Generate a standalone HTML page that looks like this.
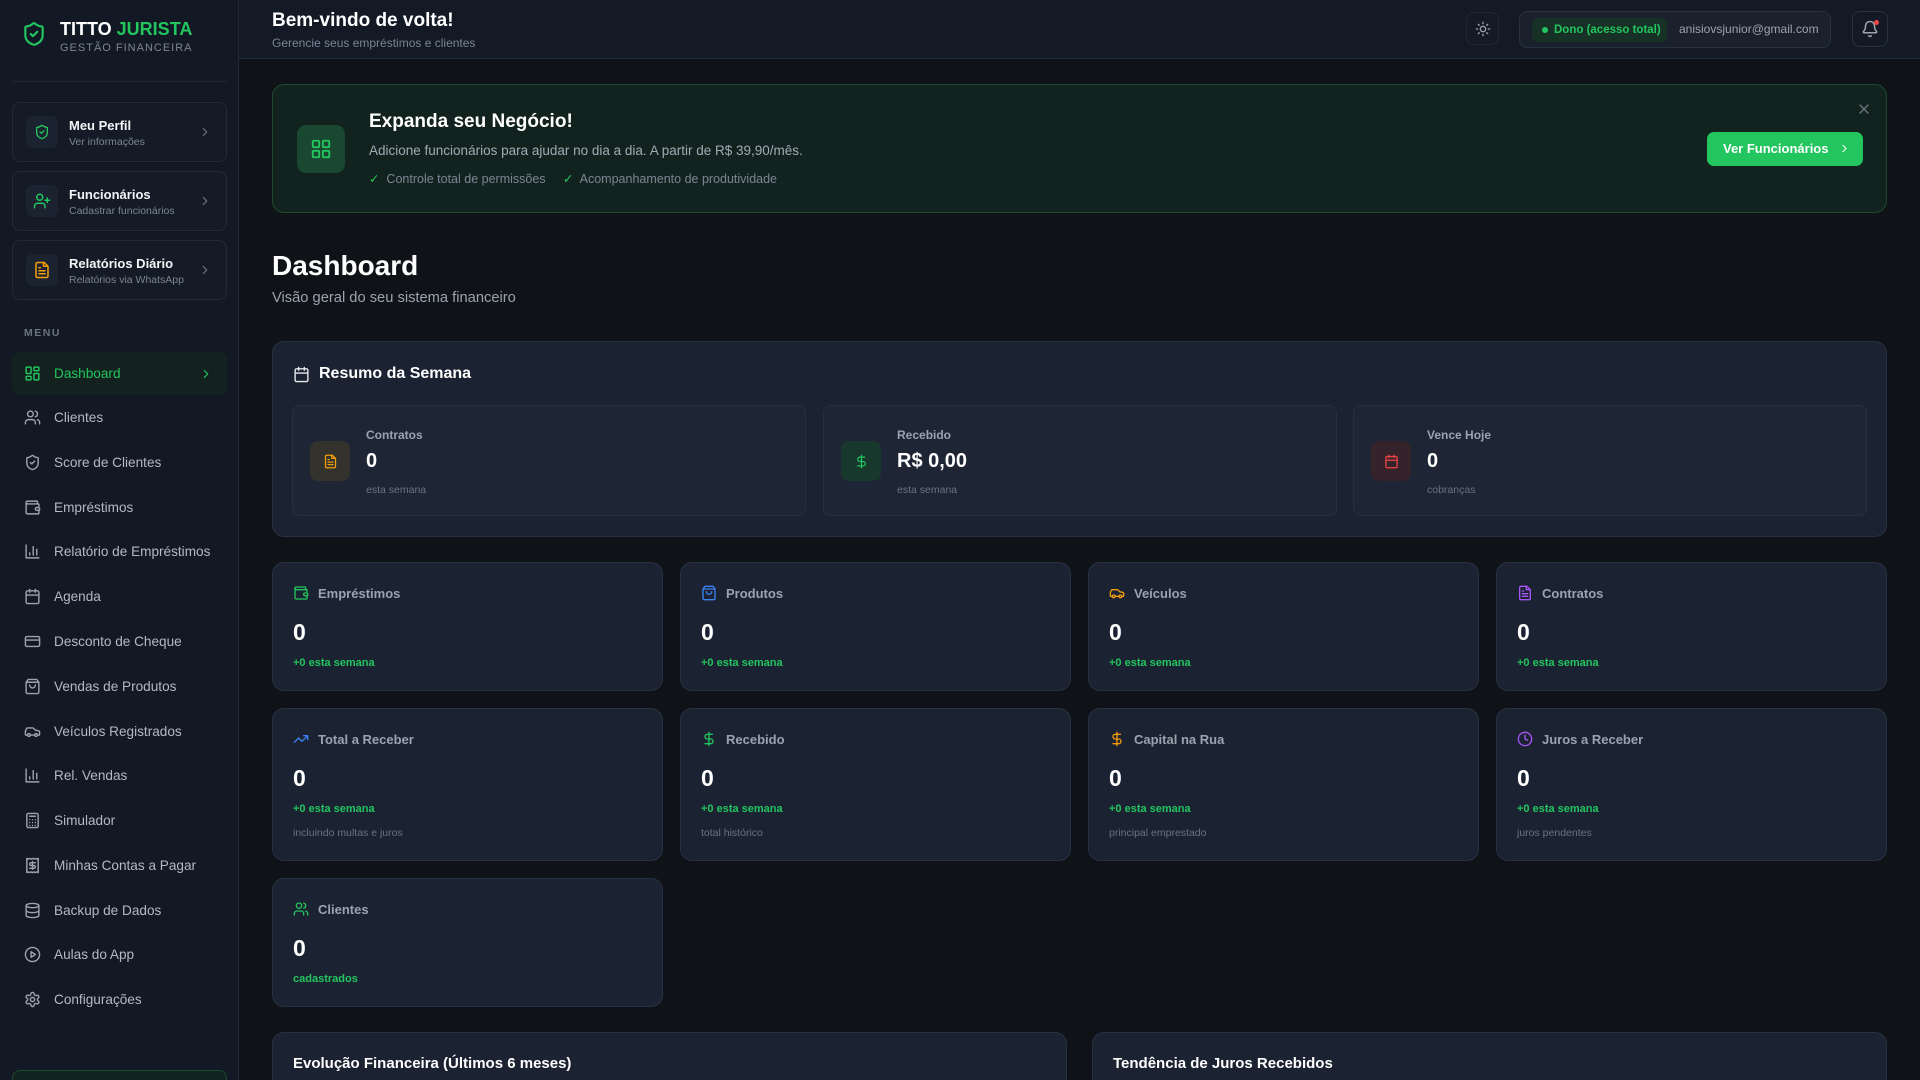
<!DOCTYPE html>
<html><head><meta charset="utf-8"><style>
*{box-sizing:border-box;margin:0;padding:0}
html{width:1920px;height:1080px;overflow:hidden}
body{width:1920px;height:1080px;overflow:hidden;background:#0f1318;font-family:"Liberation Sans",sans-serif;color:#f3f4f6;position:relative}
.abs{position:absolute}
svg{fill:none;stroke:currentColor;stroke-width:2;stroke-linecap:round;stroke-linejoin:round}
.side{left:0;top:0;width:239px;height:1080px;background:#121925;border-right:1px solid #1f2733;overflow:hidden}
.pc{position:absolute;left:12px;width:215px;height:60px;border:1px solid #222a37;border-radius:8px;background:#141b27}
.pc .ib{position:absolute;left:13px;top:13px;width:32px;height:32px;border-radius:7px;background:#1c2330;display:flex;align-items:center;justify-content:center}
.pc .t{position:absolute;left:56px;top:15px;font-size:13px;font-weight:bold;color:#f3f4f6}
.pc .s{position:absolute;left:56px;top:33px;font-size:10.5px;color:#7c8594}
.pc .ch{position:absolute;right:14px;top:22px;color:#6b7280}
.nav{position:absolute;left:12px;width:215px;height:43px;display:flex;align-items:center;padding-left:12px;font-size:13.6px;color:#b3b9c4}
.nav svg{width:17px;height:17px;margin-right:13px;color:#9ca3af}
.hdr{left:239px;top:0;width:1681px;height:59px;background:#131a26;border-bottom:1px solid #232b38}
.card{position:absolute;background:#1b2332;border:1px solid #283142;border-radius:12px}
.sc .h{position:absolute;left:20px;top:22px;display:flex;align-items:center;font-size:13px;font-weight:bold;color:#9ca3af}
.sc .h svg{width:16px;height:16px;margin-right:9px}
.sc .v{position:absolute;left:20px;top:56px;font-size:23px;font-weight:bold;color:#fff}
.sc .g{position:absolute;left:20px;top:94px;font-size:11px;font-weight:bold;color:#22c55e}
.sc .m{position:absolute;left:20px;top:118px;font-size:10.5px;color:#6b7280}
.ic{position:absolute;border:1px solid #263041;border-radius:8px;background:#1e2635;height:111px;top:405px}
.ic .b{position:absolute;left:17px;top:35px;width:40px;height:40px;border-radius:8px;display:flex;align-items:center;justify-content:center}
.ic .l{position:absolute;left:73px;top:22px;font-size:12px;font-weight:bold;color:#9ca3af}
.ic .v{position:absolute;left:73px;top:44px;font-size:20px;font-weight:bold;color:#fff}
.ic .s{position:absolute;left:73px;top:78px;font-size:10.5px;color:#6b7280}
</style></head><body>
<div class="abs side">
 <svg class="abs" style="left:21px;top:21px;width:26px;height:26px;color:#22c55e" viewBox="0 0 24 24"><path d="M20 13c0 5-3.5 7.5-7.66 8.95a1 1 0 0 1-.67-.01C7.5 20.5 4 18 4 13V6a1 1 0 0 1 1-1c2 0 4.5-1.2 6.24-2.72a1.17 1.17 0 0 1 1.52 0C14.51 3.81 17 5 19 5a1 1 0 0 1 1 1z"/><path d="m9 12 2 2 4-4"/></svg>
 <div class="abs" style="left:60px;top:19px;font-size:18px;font-weight:bold;color:#fff">TITTO <span style="color:#22c55e">JURISTA</span></div>
 <div class="abs" style="left:60px;top:42px;font-size:11px;letter-spacing:1px;color:#7c8594">GESTÃO FINANCEIRA</div>
 <div class="abs" style="left:12px;top:81px;width:215px;height:1px;background:#1f2733"></div>
 <div class="pc" style="top:102px"><div class="ib"><svg style="width:16px;height:16px;color:#22c55e" viewBox="0 0 24 24"><path d="M20 13c0 5-3.5 7.5-7.66 8.95a1 1 0 0 1-.67-.01C7.5 20.5 4 18 4 13V6a1 1 0 0 1 1-1c2 0 4.5-1.2 6.24-2.72a1.17 1.17 0 0 1 1.52 0C14.51 3.81 17 5 19 5a1 1 0 0 1 1 1z"/><path d="m9 12 2 2 4-4"/></svg></div><div class="t">Meu Perfil</div><div class="s">Ver informações</div><svg class="ch" style="width:14px;height:14px" viewBox="0 0 24 24"><path d="m9 18 6-6-6-6"/></svg></div>
 <div class="pc" style="top:171px"><div class="ib"><svg style="width:18px;height:18px;color:#22c55e" viewBox="0 0 24 24"><path d="M16 21v-2a4 4 0 0 0-4-4H6a4 4 0 0 0-4 4v2"/><circle cx="9" cy="7" r="4"/><path d="M19 8v6M22 11h-6"/></svg></div><div class="t">Funcionários</div><div class="s">Cadastrar funcionários</div><svg class="ch" style="width:14px;height:14px" viewBox="0 0 24 24"><path d="m9 18 6-6-6-6"/></svg></div>
 <div class="pc" style="top:240px"><div class="ib"><svg style="width:18px;height:18px;color:#f59e0b" viewBox="0 0 24 24"><path d="M15 2H6a2 2 0 0 0-2 2v16a2 2 0 0 0 2 2h12a2 2 0 0 0 2-2V7z"/><path d="M14 2v5h5M16 13H8M16 17H8M10 9H8"/></svg></div><div class="t">Relatórios Diário</div><div class="s">Relatórios via WhatsApp</div><svg class="ch" style="width:14px;height:14px" viewBox="0 0 24 24"><path d="m9 18 6-6-6-6"/></svg></div>
 <div class="abs" style="left:24px;top:327px;font-size:10.5px;font-weight:bold;letter-spacing:1.5px;color:#6b7280">MENU</div>
 <div class="nav" style="top:352px;background:#13221f;border-radius:8px;color:#22c55e"><svg style="color:#22c55e" viewBox="0 0 24 24"><rect x="3" y="3" width="7" height="9" rx="1"/><rect x="14" y="3" width="7" height="5" rx="1"/><rect x="14" y="12" width="7" height="9" rx="1"/><rect x="3" y="16" width="7" height="5" rx="1"/></svg>Dashboard<svg style="position:absolute;right:14px;width:14px;height:14px;color:#22c55e;margin:0" viewBox="0 0 24 24"><path d="m9 18 6-6-6-6"/></svg></div>
 <div class="nav" style="top:396px"><svg viewBox="0 0 24 24"><path d="M16 21v-2a4 4 0 0 0-4-4H6a4 4 0 0 0-4 4v2"/><circle cx="9" cy="7" r="4"/><path d="M22 21v-2a4 4 0 0 0-3-3.87M16 3.13a4 4 0 0 1 0 7.75"/></svg>Clientes</div>
 <div class="nav" style="top:441px"><svg viewBox="0 0 24 24"><path d="M20 13c0 5-3.5 7.5-7.66 8.95a1 1 0 0 1-.67-.01C7.5 20.5 4 18 4 13V6a1 1 0 0 1 1-1c2 0 4.5-1.2 6.24-2.72a1.17 1.17 0 0 1 1.52 0C14.51 3.81 17 5 19 5a1 1 0 0 1 1 1z"/><path d="m9 12 2 2 4-4"/></svg>Score de Clientes</div>
 <div class="nav" style="top:486px"><svg viewBox="0 0 24 24"><path d="M19 7V4a1 1 0 0 0-1-1H5a2 2 0 0 0 0 4h15a1 1 0 0 1 1 1v4h-3a2 2 0 0 0 0 4h3a1 1 0 0 0 1-1v-2"/><path d="M3 5v14a2 2 0 0 0 2 2h15a1 1 0 0 0 1-1v-4"/></svg>Empréstimos</div>
 <div class="nav" style="top:530px"><svg viewBox="0 0 24 24"><path d="M3 3v18h18M18 17V9M13 17V5M8 17v-3"/></svg>Relatório de Empréstimos</div>
 <div class="nav" style="top:575px"><svg viewBox="0 0 24 24"><rect x="3" y="4" width="18" height="18" rx="2"/><path d="M16 2v4M8 2v4M3 10h18"/></svg>Agenda</div>
 <div class="nav" style="top:620px"><svg viewBox="0 0 24 24"><rect x="2" y="5" width="20" height="14" rx="2"/><path d="M2 10h20"/></svg>Desconto de Cheque</div>
 <div class="nav" style="top:665px"><svg viewBox="0 0 24 24"><path d="M6 2 3 6v14a2 2 0 0 0 2 2h14a2 2 0 0 0 2-2V6l-3-4zM3 6h18M16 10a4 4 0 0 1-8 0"/></svg>Vendas de Produtos</div>
 <div class="nav" style="top:710px"><svg viewBox="0 0 24 24"><path d="M19 17h2c.6 0 1-.4 1-1v-3c0-.9-.7-1.7-1.5-1.9C18.7 10.6 16 10 16 10s-1.3-1.4-2.2-2.3c-.5-.4-1.1-.7-1.8-.7H5c-.6 0-1.1.4-1.4.9l-1.4 2.9A3.7 3.7 0 0 0 2 12v4c0 .6.4 1 1 1h2"/><circle cx="7" cy="17" r="2"/><path d="M9 17h6"/><circle cx="17" cy="17" r="2"/></svg>Veículos Registrados</div>
 <div class="nav" style="top:754px"><svg viewBox="0 0 24 24"><path d="M3 3v18h18M18 17V9M13 17V5M8 17v-3"/></svg>Rel. Vendas</div>
 <div class="nav" style="top:799px"><svg viewBox="0 0 24 24"><rect x="4" y="2" width="16" height="20" rx="2"/><path d="M8 6h8M8 11h.01M12 11h.01M16 11h.01M8 15h.01M12 15h.01M16 15h.01M8 19h.01M12 19h.01M16 19h.01"/></svg>Simulador</div>
 <div class="nav" style="top:844px"><svg viewBox="0 0 24 24"><path d="M4 2v20l2-1 2 1 2-1 2 1 2-1 2 1 2-1 2 1V2l-2 1-2-1-2 1-2-1-2 1-2-1-2 1z"/><path d="M16 8h-6a2 2 0 1 0 0 4h4a2 2 0 1 1 0 4H8M12 17.5v-11"/></svg>Minhas Contas a Pagar</div>
 <div class="nav" style="top:889px"><svg viewBox="0 0 24 24"><ellipse cx="12" cy="5" rx="9" ry="3"/><path d="M3 5v14a9 3 0 0 0 18 0V5M3 12a9 3 0 0 0 18 0"/></svg>Backup de Dados</div>
 <div class="nav" style="top:933px"><svg viewBox="0 0 24 24"><circle cx="12" cy="12" r="10"/><path d="m10 8 6 4-6 4z"/></svg>Aulas do App</div>
 <div class="nav" style="top:978px"><svg viewBox="0 0 24 24"><path d="M12.22 2h-.44a2 2 0 0 0-2 2v.18a2 2 0 0 1-1 1.73l-.43.25a2 2 0 0 1-2 0l-.15-.08a2 2 0 0 0-2.73.73l-.22.38a2 2 0 0 0 .73 2.73l.15.1a2 2 0 0 1 1 1.72v.51a2 2 0 0 1-1 1.74l-.15.09a2 2 0 0 0-.73 2.73l.22.38a2 2 0 0 0 2.73.73l.15-.08a2 2 0 0 1 2 0l.43.25a2 2 0 0 1 1 1.73V20a2 2 0 0 0 2 2h.44a2 2 0 0 0 2-2v-.18a2 2 0 0 1 1-1.730l.43-.25a2 2 0 0 1 2 0l.15.08a2 2 0 0 0 2.73-.73l.22-.39a2 2 0 0 0-.73-2.73l-.15-.08a2 2 0 0 1-1-1.74v-.5a2 2 0 0 1 1-1.74l.15-.09a2 2 0 0 0 .73-2.73l-.22-.38a2 2 0 0 0-2.73-.73l-.15.08a2 2 0 0 1-2 0l-.43-.25a2 2 0 0 1-1-1.73V4a2 2 0 0 0-2-2z"/><circle cx="12" cy="12" r="3"/></svg>Configurações</div>
 <div class="abs" style="left:12px;top:1070px;width:215px;height:30px;border:1px solid #1d4a2e;border-radius:8px;background:#12231f"></div>
</div>

<div class="abs hdr">
 <div class="abs" style="left:33px;top:10px;font-size:19px;font-weight:bold;color:#fff">Bem-vindo de volta!</div>
 <div class="abs" style="left:33px;top:36px;font-size:12px;color:#7c8594">Gerencie seus empréstimos e clientes</div>
 <div class="abs" style="left:1227px;top:12px;width:33px;height:33px;border:1px solid #1f2733;border-radius:8px;display:flex;align-items:center;justify-content:center;color:#9ca3af"><svg style="width:16px;height:16px" viewBox="0 0 24 24"><circle cx="12" cy="12" r="4"/><path d="M12 2v2M12 20v2M4.93 4.93l1.41 1.41M17.66 17.66l1.41 1.41M2 12h2M20 12h2M6.34 17.66l-1.41 1.41M19.07 4.93l-1.41 1.41"/></svg></div>
 <div class="abs" style="left:1280px;top:11px;width:312px;height:37px;border:1px solid #283142;border-radius:8px;background:#1a212d">
  <div class="abs" style="left:12px;top:6px;width:135px;height:24px;border-radius:6px;background:#173126;font-size:11.5px;font-weight:bold;color:#22c55e;line-height:24px;padding-left:22px"><span class="abs" style="left:10px;top:9px;width:6px;height:6px;border-radius:50%;background:#22c55e"></span>Dono (acesso total)</div>
  <div class="abs" style="left:159px;top:10px;font-size:12px;color:#9ca3af">anisiovsjunior@gmail.com</div>
 </div>
 <div class="abs" style="left:1613px;top:11px;width:36px;height:36px;border:1px solid #283142;border-radius:8px;display:flex;align-items:center;justify-content:center;color:#9ca3af"><svg style="width:18px;height:18px" viewBox="0 0 24 24"><path d="M10.27 21a2 2 0 0 0 3.46 0M3.26 15.33A1 1 0 0 0 4 17h16a1 1 0 0 0 .74-1.67C19.41 13.960 18 12.5 18 8A6 6 0 0 0 6 8c0 4.5-1.41 5.96-2.74 7.33"/></svg><span class="abs" style="left:21px;top:8px;width:5px;height:5px;border-radius:50%;background:#ef4444"></span></div>
</div>

<div class="abs" style="left:272px;top:84px;width:1615px;height:129px;background:#12231f;border:1px solid #1d4a2e;border-radius:12px">
 <div class="abs" style="left:24px;top:40px;width:48px;height:48px;border-radius:9px;background:#1a4730;display:flex;align-items:center;justify-content:center;color:#22c55e"><svg style="width:22px;height:22px" viewBox="0 0 24 24"><rect x="3" y="3" width="7" height="7" rx="1"/><rect x="14" y="3" width="7" height="7" rx="1"/><rect x="14" y="14" width="7" height="7" rx="1"/><rect x="3" y="14" width="7" height="7" rx="1"/></svg></div>
 <div class="abs" style="left:96px;top:26px;font-size:19px;font-weight:bold;color:#fff">Expanda seu Negócio!</div>
 <div class="abs" style="left:96px;top:58px;font-size:13.5px;color:#a3aab5">Adicione funcionários para ajudar no dia a dia. A partir de R$ 39,90/mês.</div>
 <div class="abs" style="left:96px;top:86px;font-size:12.5px;color:#7c8594"><span style="color:#22c55e">✓</span>&nbsp; Controle total de permissões &nbsp;&nbsp;&nbsp; <span style="color:#22c55e">✓</span>&nbsp; Acompanhamento de produtividade</div>
 <svg class="abs" style="left:1583px;top:16px;width:16px;height:16px;color:#6b7280" viewBox="0 0 24 24"><path d="M18 6 6 18M6 6l12 12"/></svg>
 <div class="abs" style="left:1434px;top:47px;width:156px;height:34px;border-radius:7px;background:#22c55e;color:#fff;font-size:13px;font-weight:bold;line-height:34px;padding-left:16px">Ver Funcionários <svg style="width:13px;height:13px;vertical-align:-2px;margin-left:6px" viewBox="0 0 24 24"><path d="m9 18 6-6-6-6"/></svg></div>
</div>

<div class="abs" style="left:272px;top:250px;font-size:28px;font-weight:bold;color:#fff">Dashboard</div>
<div class="abs" style="left:272px;top:290px;font-size:14.7px;color:#9ca3af">Visão geral do seu sistema financeiro</div>

<div class="card" style="left:272px;top:341px;width:1615px;height:196px">
 <svg class="abs" style="left:20px;top:24px;width:17px;height:17px;color:#e5e7eb" viewBox="0 0 24 24"><rect x="3" y="4" width="18" height="18" rx="2"/><path d="M16 2v4M8 2v4M3 10h18"/></svg>
 <div class="abs" style="left:46px;top:23px;font-size:16px;font-weight:bold;color:#fff">Resumo da Semana</div>
</div>
<div class="ic" style="left:292px;width:514px"><div class="b" style="background:#33322c;color:#f59e0b"><svg style="width:15px;height:15px" viewBox="0 0 24 24"><path d="M15 2H6a2 2 0 0 0-2 2v16a2 2 0 0 0 2 2h12a2 2 0 0 0 2-2V7z"/><path d="M14 2v5h5M16 13H8M16 17H8M10 9H8"/></svg></div><div class="l">Contratos</div><div class="v">0</div><div class="s">esta semana</div></div>
<div class="ic" style="left:823px;width:514px"><div class="b" style="background:#18372d;color:#22c55e"><svg style="width:15px;height:15px" viewBox="0 0 24 24"><path d="M12 2v20M17 5H9.5a3.5 3.5 0 0 0 0 7h5a3.5 3.5 0 0 1 0 7H6"/></svg></div><div class="l">Recebido</div><div class="v">R$ 0,00</div><div class="s">esta semana</div></div>
<div class="ic" style="left:1353px;width:514px"><div class="b" style="background:#35232b;color:#ef4444"><svg style="width:15px;height:15px" viewBox="0 0 24 24"><rect x="3" y="4" width="18" height="18" rx="2"/><path d="M16 2v4M8 2v4M3 10h18"/></svg></div><div class="l">Vence Hoje</div><div class="v">0</div><div class="s">cobranças</div></div>

<div class="card sc" style="left:272px;top:562px;width:391px;height:129px"><div class="h"><svg style="color:#22c55e" viewBox="0 0 24 24"><path d="M19 7V4a1 1 0 0 0-1-1H5a2 2 0 0 0 0 4h15a1 1 0 0 1 1 1v4h-3a2 2 0 0 0 0 4h3a1 1 0 0 0 1-1v-2"/><path d="M3 5v14a2 2 0 0 0 2 2h15a1 1 0 0 0 1-1v-4"/></svg>Empréstimos</div><div class="v">0</div><div class="g">+0 esta semana</div></div>
<div class="card sc" style="left:680px;top:562px;width:391px;height:129px"><div class="h"><svg style="color:#3b82f6" viewBox="0 0 24 24"><path d="M6 2 3 6v14a2 2 0 0 0 2 2h14a2 2 0 0 0 2-2V6l-3-4zM3 6h18M16 10a4 4 0 0 1-8 0"/></svg>Produtos</div><div class="v">0</div><div class="g">+0 esta semana</div></div>
<div class="card sc" style="left:1088px;top:562px;width:391px;height:129px"><div class="h"><svg style="color:#f59e0b" viewBox="0 0 24 24"><path d="M19 17h2c.6 0 1-.4 1-1v-3c0-.9-.7-1.7-1.5-1.9C18.7 10.6 16 10 16 10s-1.3-1.4-2.2-2.3c-.5-.4-1.1-.7-1.8-.7H5c-.6 0-1.1.4-1.4.9l-1.4 2.9A3.7 3.7 0 0 0 2 12v4c0 .6.4 1 1 1h2"/><circle cx="7" cy="17" r="2"/><path d="M9 17h6"/><circle cx="17" cy="17" r="2"/></svg>Veículos</div><div class="v">0</div><div class="g">+0 esta semana</div></div>
<div class="card sc" style="left:1496px;top:562px;width:391px;height:129px"><div class="h"><svg style="color:#a855f7" viewBox="0 0 24 24"><path d="M15 2H6a2 2 0 0 0-2 2v16a2 2 0 0 0 2 2h12a2 2 0 0 0 2-2V7z"/><path d="M14 2v5h5M16 13H8M16 17H8M10 9H8"/></svg>Contratos</div><div class="v">0</div><div class="g">+0 esta semana</div></div>

<div class="card sc" style="left:272px;top:708px;width:391px;height:153px"><div class="h"><svg style="color:#3b82f6" viewBox="0 0 24 24"><path d="m22 7-8.5 8.5-5-5L2 17M16 7h6v6"/></svg>Total a Receber</div><div class="v">0</div><div class="g">+0 esta semana</div><div class="m">incluindo multas e juros</div></div>
<div class="card sc" style="left:680px;top:708px;width:391px;height:153px"><div class="h"><svg style="color:#22c55e" viewBox="0 0 24 24"><path d="M12 2v20M17 5H9.5a3.5 3.5 0 0 0 0 7h5a3.5 3.5 0 0 1 0 7H6"/></svg>Recebido</div><div class="v">0</div><div class="g">+0 esta semana</div><div class="m">total histórico</div></div>
<div class="card sc" style="left:1088px;top:708px;width:391px;height:153px"><div class="h"><svg style="color:#f59e0b" viewBox="0 0 24 24"><path d="M12 2v20M17 5H9.5a3.5 3.5 0 0 0 0 7h5a3.5 3.5 0 0 1 0 7H6"/></svg>Capital na Rua</div><div class="v">0</div><div class="g">+0 esta semana</div><div class="m">principal emprestado</div></div>
<div class="card sc" style="left:1496px;top:708px;width:391px;height:153px"><div class="h"><svg style="color:#a855f7" viewBox="0 0 24 24"><circle cx="12" cy="12" r="10"/><path d="M12 6v6l4 2"/></svg>Juros a Receber</div><div class="v">0</div><div class="g">+0 esta semana</div><div class="m">juros pendentes</div></div>

<div class="card sc" style="left:272px;top:878px;width:391px;height:129px"><div class="h"><svg style="color:#22c55e" viewBox="0 0 24 24"><path d="M16 21v-2a4 4 0 0 0-4-4H6a4 4 0 0 0-4 4v2"/><circle cx="9" cy="7" r="4"/><path d="M22 21v-2a4 4 0 0 0-3-3.87M16 3.13a4 4 0 0 1 0 7.75"/></svg>Clientes</div><div class="v">0</div><div class="g">cadastrados</div></div>

<div class="card" style="left:272px;top:1032px;width:795px;height:60px;border-bottom-left-radius:0;border-bottom-right-radius:0"><div class="abs" style="left:20px;top:22px;font-size:15px;font-weight:bold;color:#fff">Evolução Financeira (Últimos 6 meses)</div></div>
<div class="card" style="left:1092px;top:1032px;width:795px;height:60px;border-bottom-left-radius:0;border-bottom-right-radius:0"><div class="abs" style="left:20px;top:22px;font-size:15px;font-weight:bold;color:#fff">Tendência de Juros Recebidos</div></div>
</body></html>
